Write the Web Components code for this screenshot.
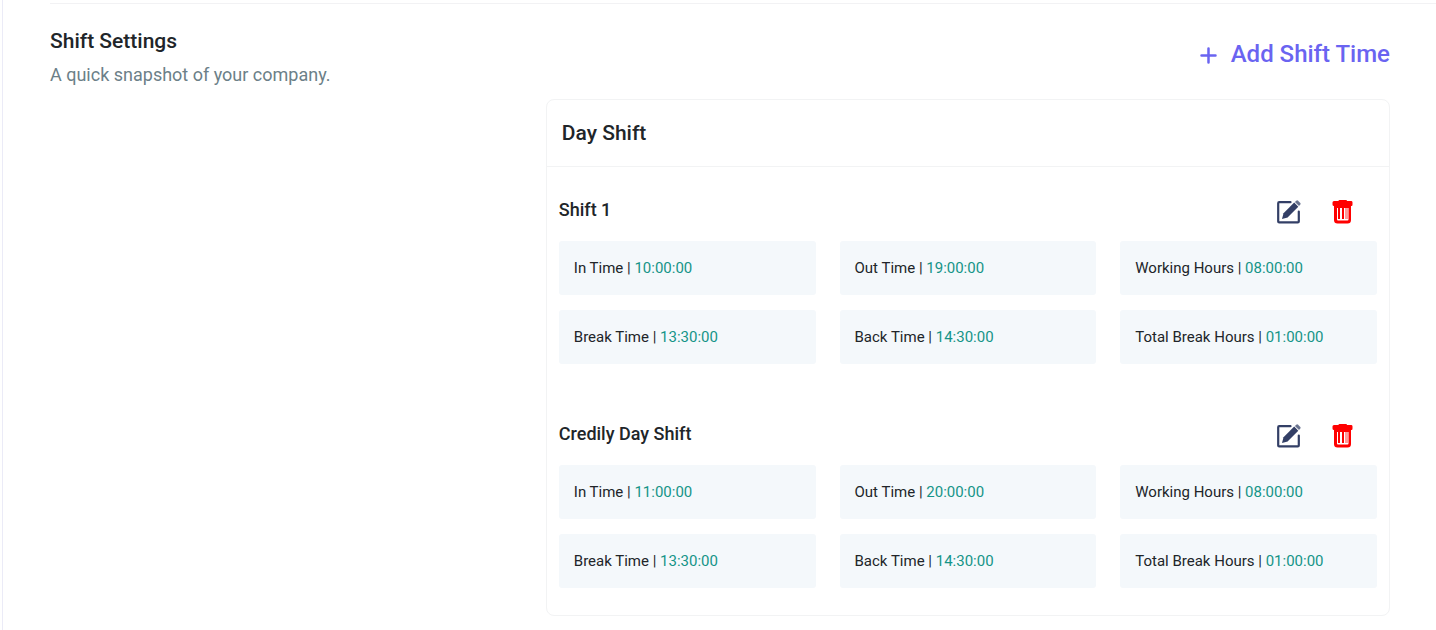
<!DOCTYPE html>
<html lang="en">
<head>
<meta charset="utf-8">
<title>Shift Settings</title>
<style>
  body { margin: 0; background: #fff; color: #212529; font-family: Roboto, "Liberation Sans", sans-serif; }
</style>
</head>
<body>
<settings-page>
  <add-button slot="action">Add Shift Time</add-button>
  <span slot="title">Shift Settings</span>
  <span slot="subtitle">A quick snapshot of your company.</span>
  <shift-card>
    <span slot="title">Day Shift</span>
    <shift-group>
      <span slot="name">Shift 1</span>
      <time-tile value="10:00:00">In Time</time-tile>
      <time-tile value="19:00:00">Out Time</time-tile>
      <time-tile value="08:00:00">Working Hours</time-tile>
      <time-tile value="13:30:00">Break Time</time-tile>
      <time-tile value="14:30:00">Back Time</time-tile>
      <time-tile value="01:00:00">Total Break Hours</time-tile>
    </shift-group>
    <shift-group>
      <span slot="name">Credily Day Shift</span>
      <time-tile value="11:00:00">In Time</time-tile>
      <time-tile value="20:00:00">Out Time</time-tile>
      <time-tile value="08:00:00">Working Hours</time-tile>
      <time-tile value="13:30:00">Break Time</time-tile>
      <time-tile value="14:30:00">Back Time</time-tile>
      <time-tile value="01:00:00">Total Break Hours</time-tile>
    </shift-group>
  </shift-card>
</settings-page>

<template id="settings-page">
  <style>
    :host { display: block; box-sizing: border-box; min-height: 100vh; margin-left: 2px; padding: 3px 0 14px 47px; border-left: 1px solid #ebebf7; }
    .section { border-top: 1px solid #f2f2f4; padding: 24px 46px 0 0; display: grid; grid-template-columns: 37fr 63fr; }
    h2 { margin: 0; font-size: 21px; line-height: 26px; font-weight: 500; }
    p { margin: 9px 0 0; font-size: 18px; line-height: 24px; color: #6c7f88; }
    .action { display: flex; justify-content: flex-end; padding: 8px 0 27px; }
  </style>
  <section class="section">
    <header><h2><slot name="title"></slot></h2><p><slot name="subtitle"></slot></p></header>
    <div>
      <div class="action"><slot name="action"></slot></div>
      <slot></slot>
    </div>
  </section>
</template>

<template id="add-button">
  <style>
    :host { display: block; }
    button { display: flex; align-items: center; gap: 14px; padding: 0; border: 0; background: none; color: #6a64f1; font: 500 24px/36px Roboto, "Liberation Sans", sans-serif; cursor: pointer; }
    svg { display: block; padding-top: 2px; }
  </style>
  <button type="button">
    <svg width="17" height="17" viewBox="0 0 17 17" fill="none" stroke="currentColor" stroke-width="2.5" stroke-linecap="round" aria-hidden="true"><path d="M8.5 1.5v14M1.5 8.5h14"/></svg>
    <span><slot></slot></span>
  </button>
</template>

<template id="shift-card">
  <style>
    :host { display: block; border: 1px solid #f2f3f4; border-radius: 8px; }
    h3 { margin: 0; padding: 20px 15px; font-size: 21px; line-height: 26px; font-weight: 500; border-bottom: 1px solid #f2f3f4; }
    .body { display: grid; gap: 54px; padding: 27px 12px; }
  </style>
  <h3><slot name="title"></slot></h3>
  <div class="body"><slot></slot></div>
</template>

<template id="shift-group">
  <style>
    :host { display: block; }
    .head { display: flex; align-items: center; justify-content: space-between; height: 32px; padding: 0 23px 15px 0; }
    h4 { margin: 0; font-size: 18px; line-height: 32px; font-weight: 500; }
    .tools { display: flex; gap: 31px; padding-top: 4px; }
    button { display: block; padding: 0; border: 0; background: none; cursor: pointer; }
    svg { display: block; }
    .tiles { display: grid; grid-template-columns: repeat(3, 1fr); gap: 15px 24px; }
  </style>
  <div class="head">
    <h4><slot name="name"></slot></h4>
    <div class="tools">
      <button type="button" aria-label="Edit shift">
        <svg width="24" height="24" viewBox="0 0 24 24"><path d="M13.5 2.2H2.2Q1.2 2.2 1.2 3.2V21.4Q1.2 22.4 2.2 22.4H20.8Q21.8 22.4 21.8 21.4V11.5" fill="none" stroke="#333f66" stroke-width="2.2" stroke-linecap="round"/><path d="M5 19 6.5 13.3 17.2 2.6 21.3 6.7 10.6 17.5Z" fill="#333f66"/><path d="M17.9 2 19.3.7Q20.2 0 21.1.7L23.3 2.9Q24 3.7 23.3 4.6L22 6Z" fill="#69738f"/></svg>
      </button>
      <button type="button" aria-label="Delete shift">
        <svg width="22" height="24" viewBox="0 0 22 24"><path d="M6.5 1V0.8Q6.5 0 7.5 0H14Q15 0 15 1H19.5Q20.5 1 20.5 2.5V4.5Q20.5 6 19.5 6H2Q.5 6 .5 4.5V2.5Q.5 1 2 1Z" fill="#f00"/><path d="M2 5H19V20Q19 23.5 15.5 23.5H5.5Q2 23.5 2 20Z" fill="#f00"/><path d="M5 8H16.5V19.5Q16.5 20.5 15.5 20.5H6Q5 20.5 5 19.5Z" fill="#fff"/><path d="M6 8h2v11h-2zM10 8h2v11h-2z" fill="#f00"/><path d="M13 8h3v11h-3z" fill="#ff9a9a"/></svg>
      </button>
    </div>
  </div>
  <div class="tiles"><slot></slot></div>
</template>

<template id="time-tile">
  <style>
    :host { display: block; padding: 15px; border-radius: 3px; background: #f4f8fb; font-size: 15px; line-height: 24px; white-space: nowrap; }
    time { color: #159488; }
  </style>
  <slot></slot> | <time></time>
</template>

<script>
  function stamp(host) {
    const root = host.attachShadow({ mode: "open" });
    root.append(document.getElementById(host.localName).content.cloneNode(true));
    return root;
  }
  class SettingsPage extends HTMLElement { constructor() { super(); stamp(this); } }
  class AddButton extends HTMLElement { constructor() { super(); stamp(this); } }
  class ShiftCard extends HTMLElement { constructor() { super(); stamp(this); } }
  class ShiftGroup extends HTMLElement { constructor() { super(); stamp(this); } }
  class TimeTile extends HTMLElement {
    constructor() { super(); stamp(this); }
    connectedCallback() { this.shadowRoot.querySelector("time").textContent = this.getAttribute("value"); }
  }
  customElements.define("settings-page", SettingsPage);
  customElements.define("add-button", AddButton);
  customElements.define("shift-card", ShiftCard);
  customElements.define("shift-group", ShiftGroup);
  customElements.define("time-tile", TimeTile);
</script>
</body>
</html>
